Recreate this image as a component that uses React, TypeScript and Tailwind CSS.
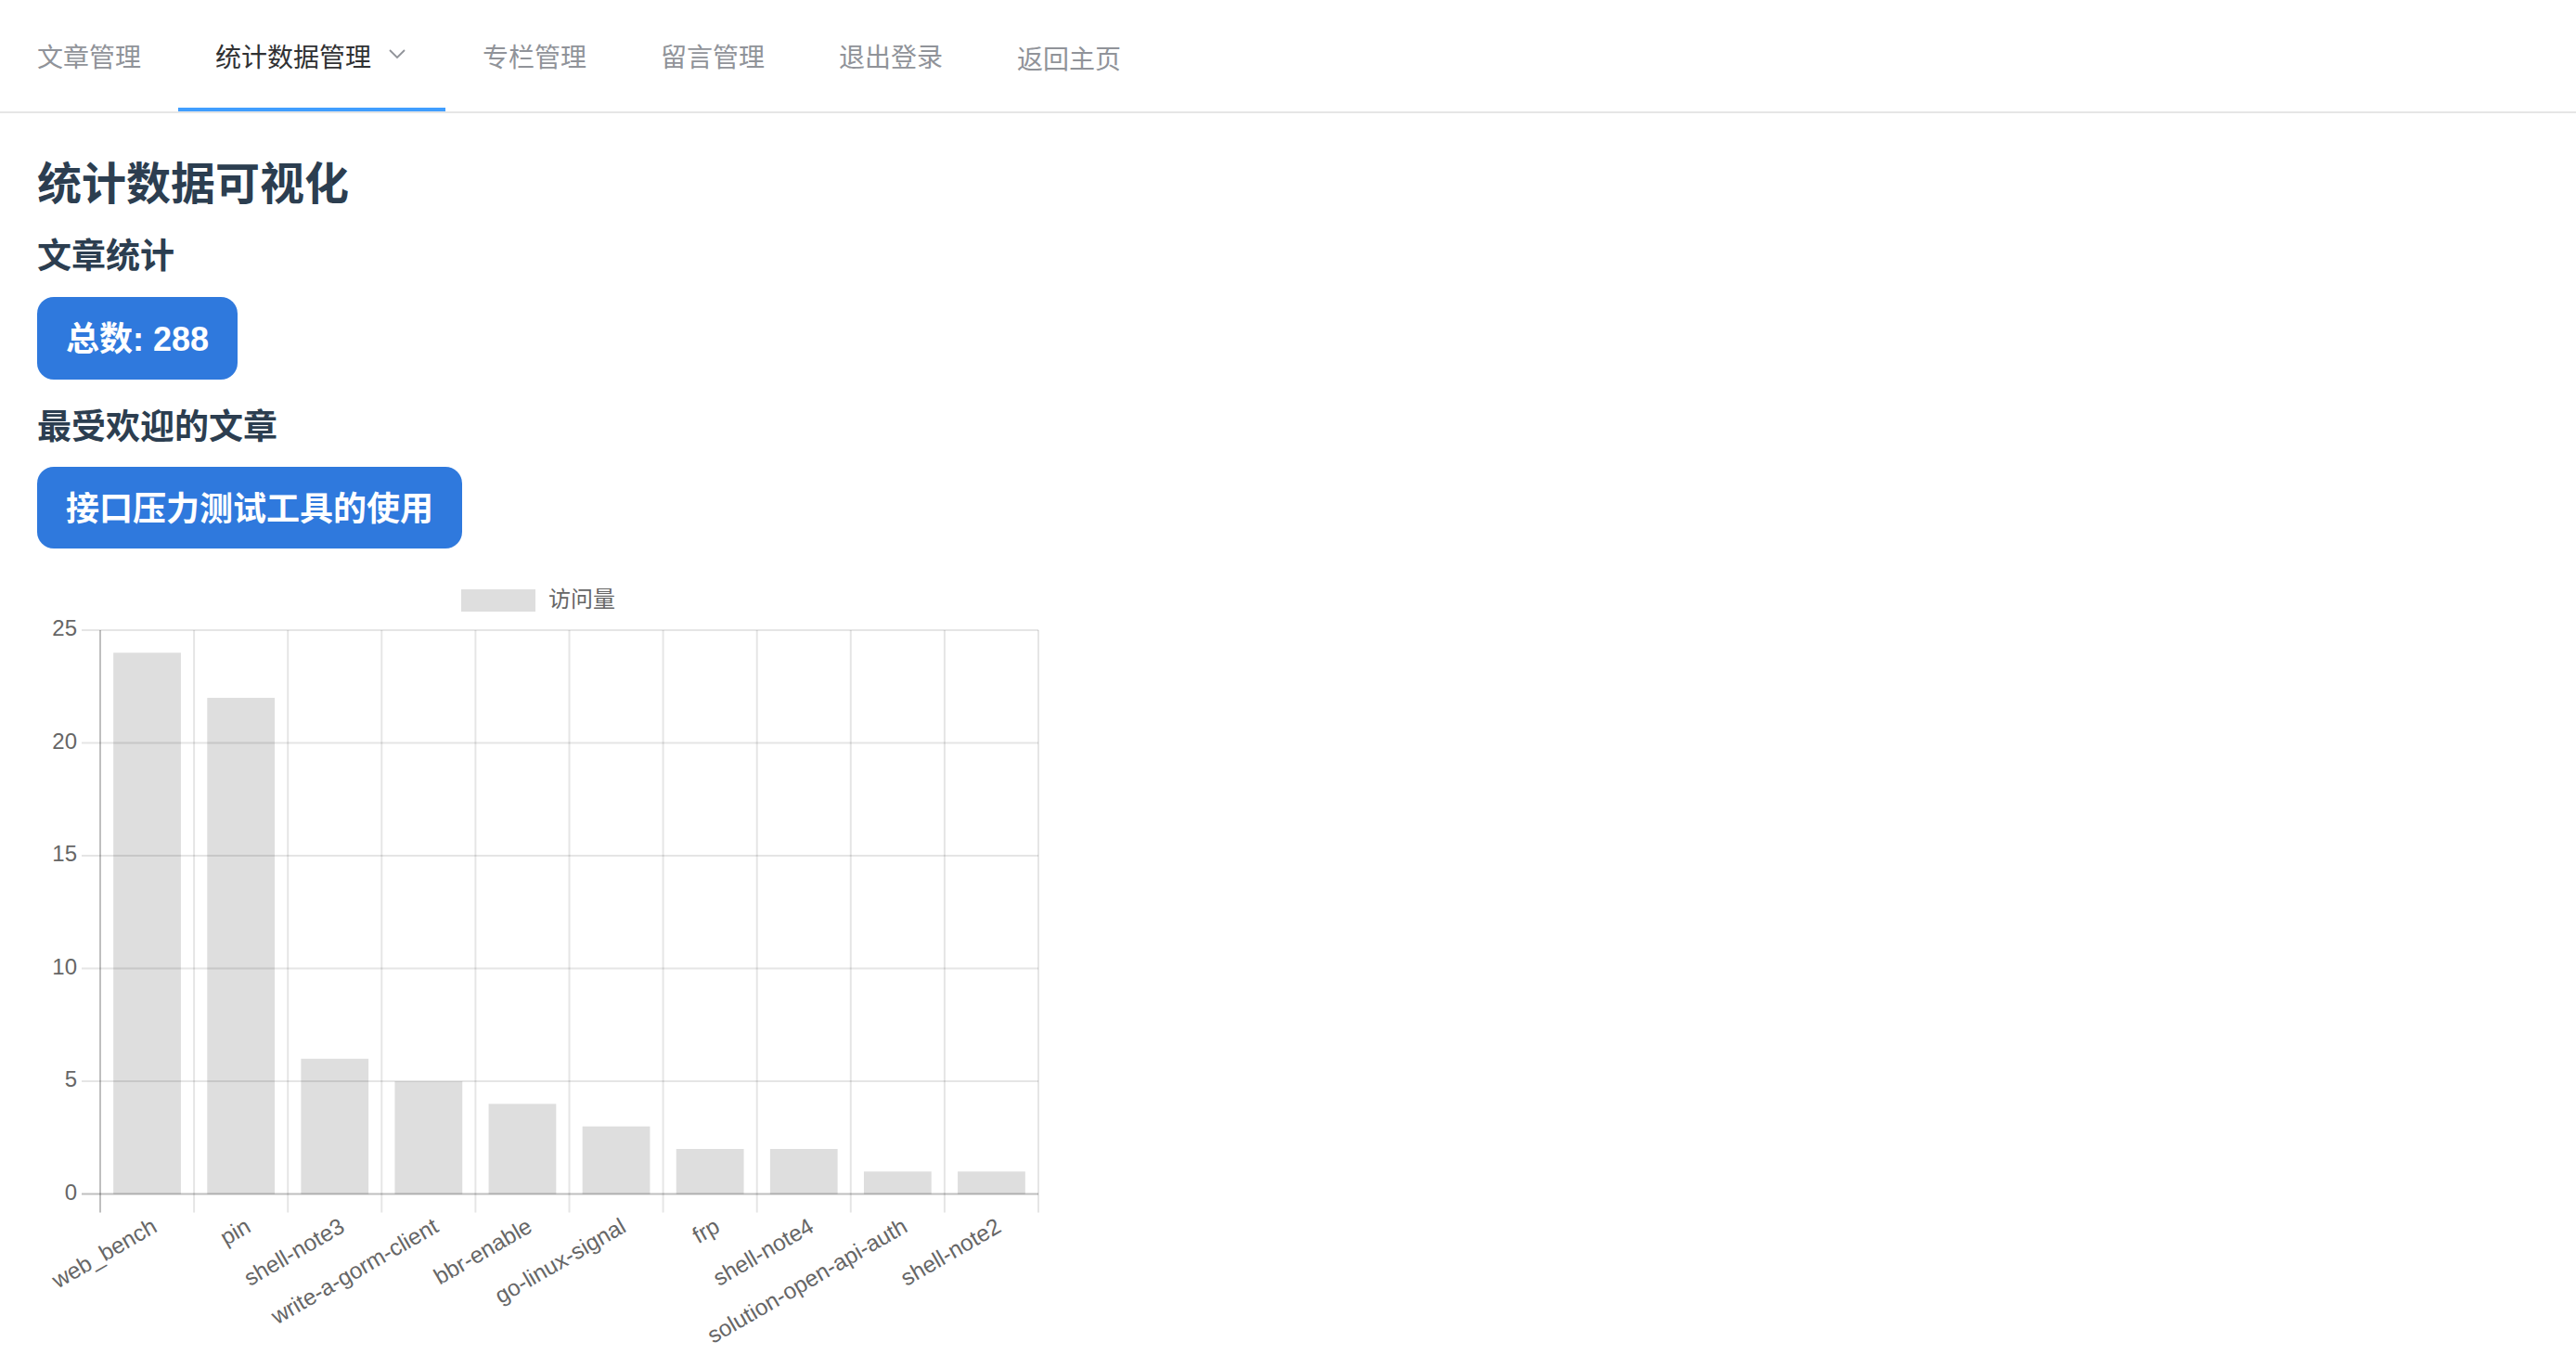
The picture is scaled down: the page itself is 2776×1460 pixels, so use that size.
import React from "react";

const navItems = ["文章管理", "统计数据管理", "专栏管理", "留言管理", "退出登录", "返回主页"];

const bars: [string, number][] = [
  ["web_bench", 24],
  ["pin", 22],
  ["shell-note3", 6],
  ["write-a-gorm-client", 5],
  ["bbr-enable", 4],
  ["go-linux-signal", 3],
  ["frp", 2],
  ["shell-note4", 2],
  ["solution-open-api-auth", 1],
  ["shell-note2", 1],
];

// chart geometry, in page pixels (svg starts at y=600)
const L = 108;
const R = 1119;
const T = 76;
const B = 683.6;
const STEP = (R - L) / bars.length;
const UNIT = (B - T) / 25;
const FONT = "'Liberation Sans', 'Noto Sans CJK SC', sans-serif";

function Chart() {
  return (
    <svg width={1160} height={860} className="block">
      {/* legend */}
      <rect x={497} y={32} width={80} height={24} fill="rgba(0,0,0,0.13)" />
      <text x={591} y={45} fontSize={24} fill="#666" fontFamily={FONT} dominantBaseline="middle">
        访问量
      </text>

      {/* horizontal grid */}
      {[0, 5, 10, 15, 20, 25].map((v) => {
        const y = B - v * UNIT;
        return (
          <g key={v}>
            <line x1={88} x2={R} y1={y} y2={y} stroke={v === 0 ? "rgba(0,0,0,0.25)" : "rgba(0,0,0,0.1)"} strokeWidth={2} />
            <text x={83} y={y} fontSize={24} fill="#666" fontFamily={FONT} textAnchor="end" dominantBaseline="middle">
              {v}
            </text>
          </g>
        );
      })}

      {/* vertical grid */}
      {Array.from({ length: bars.length + 1 }).map((_, i) => {
        const x = L + i * STEP;
        return (
          <line key={i} x1={x} x2={x} y1={T} y2={B + 20} stroke={i === 0 ? "rgba(0,0,0,0.25)" : "rgba(0,0,0,0.1)"} strokeWidth={2} />
        );
      })}

      {/* bars */}
      {bars.map(([name, v], i) => {
        const w = STEP * 0.72;
        const x = L + i * STEP + (STEP - w) / 2;
        const h = v * UNIT;
        return <rect key={name} x={x} y={B - h} width={w} height={h} fill="rgba(0,0,0,0.13)" />;
      })}

      {/* x labels */}
      {bars.map(([name], i) => {
        const cx = L + i * STEP + STEP / 2 + 9;
        const cy = B + 34;
        return (
          <text
            key={name}
            x={cx}
            y={cy}
            fontSize={24.5}
            fill="#666"
            fontFamily={FONT}
            textAnchor="end"
            dominantBaseline="middle"
            transform={`rotate(-30 ${cx} ${cy})`}
          >
            {name}
          </text>
        );
      })}
    </svg>
  );
}

export default function App() {
  return (
    <div className="min-h-screen bg-white font-['Noto_Sans_CJK_SC',sans-serif]">
      <nav className="flex h-[122px] border-b-2 border-[#e6e6e6]">
        {navItems.map((item, i) => (
          <div
            key={item}
            className={
              i === 1
                ? "flex h-[120px] items-center border-b-4 border-[#409eff] px-[40px] pt-[4px] text-[28px] text-[#303133]"
                : i === 5
                ? "flex h-[120px] items-center border-b-4 border-transparent px-[40px] pt-[8px] text-[28px] text-[#909399]"
                : "flex h-[120px] items-center border-b-4 border-transparent px-[40px] pt-[4px] text-[28px] text-[#909399]"
            }
          >
            {item}
            {i === 1 && (
              <svg width={24} height={24} viewBox="0 0 24 24" className="ml-[16px] -mt-[4px]">
                <polyline points="4,8 12,16 20,8" fill="none" stroke="#909399" strokeWidth={1.8} />
              </svg>
            )}
          </div>
        ))}
      </nav>

      <main className="pl-[40px] text-[#2c3e50]">
        <h2 className="mt-[37px] text-[48px] font-bold leading-[70px]">统计数据可视化</h2>
        <h3 className="mt-[17px] text-[37px] font-bold leading-[54px]">文章统计</h3>
        <div className="mt-[20px] flex">
          <div className="flex h-[89px] items-center rounded-[18px] bg-[#2f79dd] px-[31px] pt-[3px] font-['Liberation_Sans','Noto_Sans_CJK_SC',sans-serif] text-[36px] font-bold text-white">
            总数: 288
          </div>
        </div>
        <h3 className="mt-[21px] text-[37px] font-bold leading-[54px]">最受欢迎的文章</h3>
        <div className="mt-[19px] flex">
          <div className="flex h-[88px] items-center rounded-[18px] bg-[#2f79dd] px-[31px] pt-[3px] font-['Liberation_Sans','Noto_Sans_CJK_SC',sans-serif] text-[36px] font-bold text-white">
            接口压力测试工具的使用
          </div>
        </div>
      </main>

      <div className="mt-[12px]">
        <Chart />
      </div>
    </div>
  );
}
